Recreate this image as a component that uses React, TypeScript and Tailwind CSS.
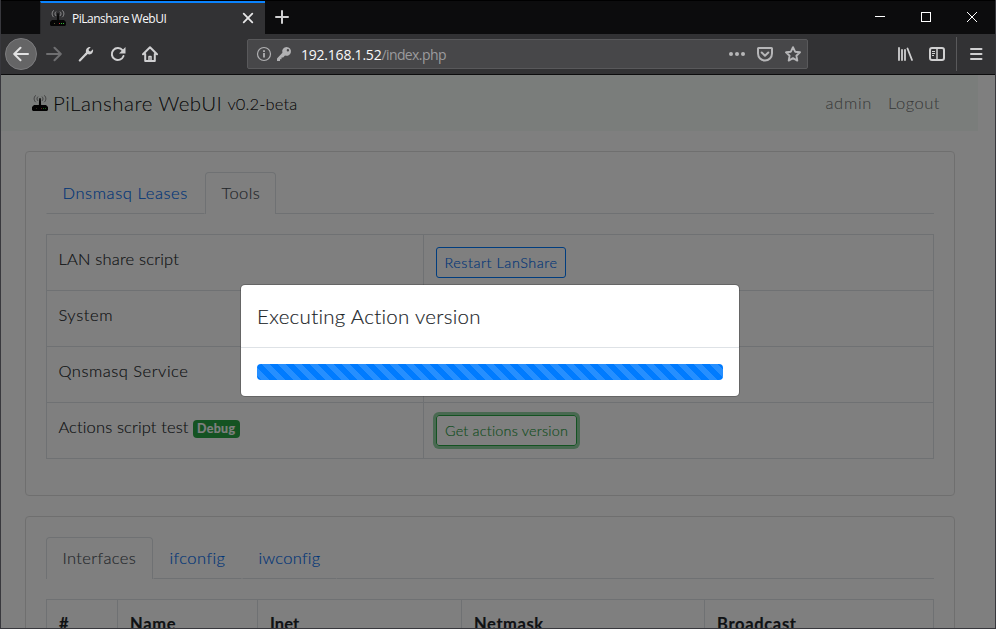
import type { ReactNode } from "react";

function RouterIcon({ waves = "#9a9a9b" }: { waves?: string }) {
  return (
    <svg width="16" height="16" viewBox="0 0 16 16" className="shrink-0" fill="none">
      <g stroke={waves} strokeWidth="0.9">
        <path d="M3.8 0.3C1.600 2 1.600 5.400 3.800 7.200M6 1.600C4.700 2.800 4.700 4.700 6 5.900M12.200 0.300C14.400 2 14.400 5.400 12.200 7.200M10 1.600C11.300 2.800 11.300 4.700 10 5.900" />
      </g>
      <path d="M7.200 3.200h1.600l.4 8H6.800z" fill="#0a0a0a" />
      <path d="M2 10h12l2 2v3l-1 1H1l-1-1v-3z" fill="#050505" />
      <path d="M4 13h1v1H4z" fill="#553" />
      <path d="M9 13h1v1H9z" fill="#b33" />
      <path d="M11 13h1v1h-1zM13 13h1v1h-1z" fill="#3b3" />
    </svg>
  );
}

function WrenchIcon() {
  return (
    <svg width="16" height="16" viewBox="0 0 16 16">
      <path d="M1.800 14.400 8 8.100" stroke="#d0d0d1" strokeWidth="2.200" strokeLinecap="round" />
      <path d="M12.800 1.100 10.600 3.600l.4 1.500 1.600.3L15 3.200c.4 2-.3 4-1.900 4.800-1.200.6-2.500.5-3.400.1L7.900 9.600 6.600 8.300 8 6.300C7.600 5 8 3.300 9 2.300 10 1.200 11.500.8 12.800 1.100z" fill="#d0d0d1" />
    </svg>
  );
}

function ReloadIcon() {
  return (
    <svg width="16" height="16" viewBox="0 0 16 16" fill="none">
      <path d="M12.600 4.400A6 6 0 1 0 13.500 10" stroke="#d0d0d1" strokeWidth="2" strokeLinecap="round" />
      <path d="M15.500 1v6.500H9z" fill="#d0d0d1" />
    </svg>
  );
}

function HomeIcon() {
  return (
    <svg width="16" height="16" viewBox="0 0 16 16" fill="none" stroke="#d0d0d1" strokeWidth="2" strokeLinecap="round" strokeLinejoin="round">
      <path d="M1 8.300 8 1.300l7 7M3.200 8v7h9.600V8" />
      <path d="M7 15v-4.500h2V15" strokeWidth="1.500" />
    </svg>
  );
}

function KeyIcon() {
  return (
    <svg width="16" height="16" viewBox="0 0 16 16">
      <path fillRule="evenodd" d="M10.600 1a4.400 4.400 0 0 0-4.200 5.700L1 12.400V15h3v-1.700h1.500v-1.700h1.700L9 9.500A4.400 4.400 0 1 0 10.600 1zm1.300 2a1.200 1.200 0 1 1 0 2.400 1.200 1.200 0 0 1 0-2.400z" fill="#b1b1b3" />
    </svg>
  );
}

function Slot({ children, className = "w-8" }: { children: ReactNode; className?: string }) {
  return <div className={`flex h-8 shrink-0 items-center justify-center ${className}`}>{children}</div>;
}

function TitleBar() {
  return (
    <div className="flex h-[34px] shrink-0 border-t border-black bg-[#0c0c0d] pl-[39px]">
      <div className="flex w-[225px] border-l border-[#29292b] border-t-2 border-t-[#0a84ff] bg-[#323234] pl-[9px] pr-[8px]">
        <div className="flex flex-1 items-center pb-px">
          <RouterIcon />
          <span className="ml-[6px] mt-px flex-1 whitespace-nowrap font-['Open_Sans',sans-serif] text-[12px] font-medium leading-4 tracking-[-0.500px] text-[#f9f9fa]">PiLanshare WebUI</span>
          <Slot className="w-[18px]">
            <svg width="12" height="12" viewBox="0 0 12 12" stroke="#e6e6e7" strokeWidth="1.800" strokeLinecap="round"><path d="m1.700 1.700 8.600 8.600m0-8.600-8.600 8.600" /></svg>
          </Slot>
        </div>
      </div>
      <Slot className="ml-[1px] w-8">
        <svg width="16" height="16" viewBox="0 0 16 16" stroke="#d0d0d1" strokeWidth="2" strokeLinecap="round"><path d="M8 2v12M2 8h12" /></svg>
      </Slot>
      <div className="ml-auto flex">
        <Slot className="w-[46px]">
          <svg width="10" height="10" viewBox="0 0 10 10" stroke="#fff" shapeRendering="crispEdges"><path d="M0 4.500h10" /></svg>
        </Slot>
        <Slot className="w-[46px]">
          <svg width="10" height="10" viewBox="0 0 10 10" fill="none" stroke="#fff" shapeRendering="crispEdges"><path d="M.5.5h9v9h-9z" /></svg>
        </Slot>
        <Slot className="w-[46px]">
          <svg width="10" height="10" viewBox="0 0 10 10" stroke="#fff"><path d="m0 0 10 10M10 0 0 10" /></svg>
        </Slot>
      </div>
    </div>
  );
}

function Toolbar() {
  return (
    <div className="flex h-[41px] shrink-0 items-center border-b border-[#0c0c0d] bg-[#323234] pl-1 pr-[3px]">
      <Slot className="w-8 rounded-full border border-[#7c7c7e] bg-[#656566]">
        <svg width="16" height="16" viewBox="0 0 16 16" fill="none" stroke="#e2e2e3" strokeWidth="2" strokeLinecap="round" strokeLinejoin="round"><path d="M15 8H1.500M7.500 1.700 1.200 8l6.300 6.300" /></svg>
      </Slot>
      <Slot className="ml-px w-8">
        <svg width="16" height="16" viewBox="0 0 16 16" fill="none" stroke="#6f6f71" strokeWidth="2" strokeLinecap="round" strokeLinejoin="round"><path d="M1 8h13.500M8.500 1.700 14.800 8l-6.300 6.300" /></svg>
      </Slot>
      <Slot><WrenchIcon /></Slot>
      <Slot><ReloadIcon /></Slot>
      <Slot><HomeIcon /></Slot>
      <div className="ml-[81px] flex h-[30px] w-[561px] items-center rounded-[2px] border border-[#59595b] bg-[#474749] pl-2">
        <svg width="16" height="16" viewBox="0 0 16 16" fill="none" stroke="#b1b1b3">
          <circle cx="8" cy="8" r="6.500" strokeWidth="1.200" />
          <path d="M8 7v4.500M8 4.200v1.700" strokeWidth="1.800" />
        </svg>
        <div className="ml-1"><KeyIcon /></div>
        <div className="ml-[9px] mt-[2px] flex whitespace-nowrap font-['Open_Sans',sans-serif] text-[14px] leading-5 text-[#f9f9fa]">
          <span className="tracking-[-0.220px]">192.168.1.52</span>
          <span className="tracking-[-0.600px] text-[#9b9b9d]">/index.php</span>
        </div>
        <div className="ml-auto flex">
          <Slot className="w-7">
            <svg width="16" height="16" viewBox="0 0 16 16" fill="#b6b6b8"><circle cx="2" cy="8" r="2" /><circle cx="8" cy="8" r="2" /><circle cx="14" cy="8" r="2" /></svg>
          </Slot>
          <Slot className="w-7">
            <svg width="16" height="16" viewBox="0 0 16 16" fill="none" stroke="#b6b6b8" strokeWidth="2" strokeLinecap="round" strokeLinejoin="round"><path d="M1.500 2h13a.5.5 0 0 1 .5.5V7.500A7 7 0 0 1 1 7.500V2.500a.5.5 0 0 1 .5-.5zM4.700 6.500 8 9.700l3.300-3.200" /></svg>
          </Slot>
          <Slot className="w-7">
            <svg width="16" height="16" viewBox="0 0 16 16" fill="none" stroke="#b6b6b8" strokeWidth="1.900" strokeLinejoin="round"><path d="m8 1.200 2.100 4.500 4.900.6-3.600 3.400.9 4.900L8 12.200l-4.300 2.400.9-4.900L1 6.300l4.900-.6z" /></svg>
          </Slot>
        </div>
      </div>
      <div className="ml-auto flex items-center">
        <Slot>
          <svg width="16" height="16" viewBox="0 0 16 16" stroke="#d0d0d1" strokeLinecap="round"><path d="M2 2v12M5 4v10M8 4v10M10.500 2.500l4.500 11.500" strokeWidth="1.800" /></svg>
        </Slot>
        <Slot>
          <svg width="16" height="16" viewBox="0 0 16 16" fill="none" stroke="#d0d0d1">
            <rect x="1" y="2" width="14" height="12" rx="2" strokeWidth="2" />
            <path d="M8 2v12" strokeWidth="1.500" />
            <path d="M3 5.500h3M3 7.500h3M3 9.500h2" />
          </svg>
        </Slot>
        <div className="ml-[3px] h-[34px] w-px bg-[#59595b]" />
        <Slot className="ml-[3px] w-8">
          <svg width="16" height="16" viewBox="0 0 16 16" stroke="#d0d0d1" strokeWidth="2" strokeLinecap="round"><path d="M3 3h10.500M3 8h10.500M3 13h10.500" /></svg>
        </Slot>
      </div>
    </div>
  );
}

function Tab({ active, className, children }: { active?: boolean; className: string; children: ReactNode }) {
  return (
    <div
      className={`h-[42px] shrink-0 whitespace-nowrap pl-[15.500px] pt-2 ${
        active ? "rounded-t border border-b-0 border-[#dee2e6] bg-white text-[#495057]" : "border border-transparent text-[#006bf0]"
      } ${className}`}
    >
      {children}
    </div>
  );
}

function ToolRow({ label, children }: { label: ReactNode; children?: ReactNode }) {
  return (
    <div className="flex h-14 border-b border-[#dee2e6]">
      <div className="w-[377px] border-r border-[#dee2e6] pl-[11.400px] pr-3 pt-3">{label}</div>
      <div className="flex-1 px-3 pt-3">{children}</div>
    </div>
  );
}

function Page() {
  return (
    <div className="h-full pr-[17px]">
      <nav className="flex h-[56px] items-center bg-[#f5faf7] pl-[31px] pr-[38px]">
        <RouterIcon waves="#707071" />
        <span className="ml-[5px] whitespace-nowrap text-[20.500px] leading-[30px] tracking-[0.480px] text-black/90">PiLanshare WebUI</span>
        <span className="ml-[5px] mt-[2px] whitespace-nowrap tracking-[0.130px] text-black/90">v0.2-beta</span>
        <div className="ml-auto flex gap-4 text-black/50">
          <span className="tracking-[0.700px]">admin</span>
          <span className="tracking-[0.500px]">Logout</span>
        </div>
      </nav>
      <section className="ml-6 mt-5 h-[345px] w-[930px] rounded border border-[#dfdfdf] px-5 pt-5">
        <div className="flex h-[42px]">
          <Tab className="w-[159px] border-b-[#dee2e6]! tracking-[0.600px]">Dnsmasq Leases</Tab>
          <Tab active className="w-[71px] tracking-[0.430px]">Tools</Tab>
          <div className="flex-1 border-b border-[#dee2e6]" />
        </div>
        <div className="mt-5 border border-b-0 border-[#dee2e6]">
          <ToolRow label={<span className="tracking-[0.200px]">LAN share script</span>}>
            <button className="block h-[31px] w-[130px] whitespace-nowrap rounded-[3px] border border-[#007bff] text-[14.400px] leading-[29px] tracking-[0.550px] text-[#006bf0]">Restart LanShare</button>
          </ToolRow>
          <ToolRow label={<span className="tracking-[0.600px]">System</span>} />
          <ToolRow label={<span className="tracking-[0.520px]">Qnsmasq Service</span>} />
          <ToolRow
            label={
              <div className="flex">
                <span className="whitespace-nowrap tracking-[0.130px]">Actions script test</span>
                <span className="ml-1 mt-[5px] flex h-[18px] w-[47px] items-center justify-center rounded bg-[#28a745] text-[12.400px] font-bold leading-none tracking-[0.400px] text-white">Debug</span>
              </div>
            }
          >
            <button className="block h-[31px] w-[141px] whitespace-nowrap rounded-[3px] border border-[#28a745] text-[14.400px] leading-[29px] tracking-[0.210px] text-[#1f9a3c] ring-3 ring-[#28a745]/50">Get actions version</button>
          </ToolRow>
        </div>
      </section>
      <section className="ml-6 mt-5 h-[345px] w-[930px] rounded border border-[#dfdfdf] px-5 pt-5">
        <div className="flex h-[42px]">
          <Tab active className="w-[107px] tracking-[0.370px]">Interfaces</Tab>
          <Tab className="w-[89px] border-b-[#dee2e6]! tracking-[0.430px]">ifconfig</Tab>
          <Tab className="w-[95px] border-b-[#dee2e6]! tracking-[0.280px]">iwconfig</Tab>
          <div className="flex-1 border-b border-[#dee2e6]" />
        </div>
        <div className="mt-5 flex h-[50px] border border-[#dee2e6] font-bold">
          <div className="w-[71px] border-r border-[#dee2e6] px-3 pt-3">#</div>
          <div className="w-[140px] border-r border-[#dee2e6] px-3 pt-3 tracking-[0.700px]">Name</div>
          <div className="w-[204px] border-r border-[#dee2e6] px-3 pt-3 tracking-[0.100px]">Inet</div>
          <div className="w-[243px] border-r border-[#dee2e6] px-3 pt-3 tracking-[0.600px]">Netmask</div>
          <div className="flex-1 px-3 pt-3 tracking-[0.680px]">Broadcast</div>
        </div>
      </section>
    </div>
  );
}

function ProgressModal() {
  return (
    <div className="absolute inset-0 bg-black/50">
      <div className="absolute left-[239px] top-[209px] w-[500px] rounded-[5px] border border-black/20 bg-white bg-clip-padding">
        <h5 className="border-b border-[#dee2e6] p-4 text-[20.500px] leading-[30px] tracking-[0.290px]">Executing Action version</h5>
        <div className="p-4">
          <div className="h-4 rounded bg-[#007bff] bg-[linear-gradient(45deg,rgba(255,255,255,0.15)_25%,transparent_25%,transparent_50%,rgba(255,255,255,0.15)_50%,rgba(255,255,255,0.15)_75%,transparent_75%)] bg-[length:16px_16px] bg-[position:4px_0]" />
        </div>
      </div>
    </div>
  );
}

export default function App() {
  return (
    <div className="flex h-[629px] w-[996px] flex-col overflow-hidden border-x border-b border-[#38383d] bg-[#323234]">
      <TitleBar />
      <Toolbar />
      <main className="relative min-h-0 flex-1 overflow-hidden bg-white font-['Lato','Open_Sans',sans-serif] text-[16.500px] font-light leading-6 text-[#212529] [-webkit-text-stroke:0.150px]">
        <Page />
        <ProgressModal />
      </main>
    </div>
  );
}
